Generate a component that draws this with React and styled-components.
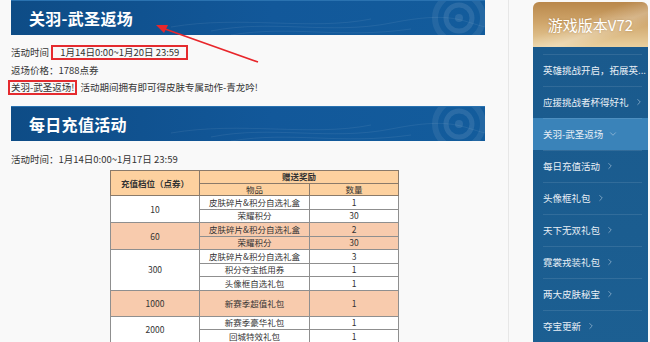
import styled, { createGlobalStyle } from 'styled-components'
import { ChevronRight, ChevronDown } from 'lucide-react'

const GlobalStyle = createGlobalStyle`
  html, body {
    margin: 0;
    padding: 0;
    background: #f9f9f9;
  }
  body {
    font-family: "Noto Sans CJK SC", "Noto Sans", sans-serif;
    color: #333;
  }
`

const Page = styled.div`
  display: flex;
  width: 650px;
  height: 342px;
  overflow: hidden;
  background: #f9f9f9;
`

const Main = styled.div`
  position: relative;
  width: 497px;
  padding-left: 11px;
  border-right: 1px solid #e7e7e7;
  flex-shrink: 0;
`

const Banner = styled.div`
  position: relative;
  width: 474px;
  height: 35px;
  margin-top: ${p => p.$top || 0}px;
  background: linear-gradient(90deg, #0e4c86 0%, #12589a 55%, #135c9c 100%);
  border-top: 1px solid #2a72b0;
  box-sizing: border-box;
  display: flex;
  align-items: center;
  padding-left: 18px;
  overflow: hidden;
`

const BannerTitle = styled.h2`
  margin: 0;
  font-size: 16px;
  font-weight: 700;
  color: #fff;
  letter-spacing: 0.3px;
  position: relative;
  z-index: 1;
`

const Deco = styled.svg`
  position: absolute;
  right: 0;
  top: 0;
  width: 474px;
  height: 35px;
`

const Info = styled.div`
  padding: 9px 0 9px;
  font-size: 9.5px;
  line-height: 17.5px;
`

const Line = styled.div`
  white-space: nowrap;
`

const RedBox = styled.span`
  display: inline-block;
  border: 2px solid #e52b2f;
  line-height: 11px;
  padding: 0 ${p => p.$pad || 2}px;
  margin-left: ${p => p.$ml || 0}px;
  margin-right: 3px;
`

const Arrow = styled.svg`
  position: absolute;
  left: 0;
  top: 0;
  width: 300px;
  height: 80px;
  pointer-events: none;
`

const TableWrap = styled.div`
  margin-left: 99px;
  margin-top: 2px;
`

const Table = styled.table`
  border-collapse: collapse;
  width: 288px;
  border: 1px solid #3a3a3a;
  font-size: 8.5px;
  color: #333;
  text-align: center;
  table-layout: fixed;
`

const Th = styled.th`
  background: #fdd19f;
  border: 1px solid #8a7a6a;
  font-weight: ${p => (p.$bold ? 700 : 400)};
  height: 11.5px;
  padding: 0;
  line-height: 11px;
`

const Td = styled.td`
  background: ${p => (p.$hl ? '#f8cbad' : '#fff')};
  border: 1px solid #8f8f8f;
  height: 12.5px;
  padding: 0;
  line-height: 11px;
`

const Aside = styled.div`
  margin-left: 24px;
  width: 115px;
  flex-shrink: 0;
  padding-top: 2px;
`

const AsideHead = styled.div`
  height: 45px;
  border-radius: 6px 6px 0 0;
  background:
    linear-gradient(160deg, rgba(255,255,255,0) 40%, rgba(255,255,255,0.25) 60%, rgba(255,255,255,0) 75%),
    linear-gradient(180deg, #b9884c 0%, #cfa56a 45%, #e9d09f 100%);
  color: #fff;
  font-size: 15px;
  display: flex;
  align-items: center;
  justify-content: center;
  text-shadow: 0 0 2px rgba(120, 80, 30, 0.4);
`

const Nav = styled.div`
  background: linear-gradient(180deg, #1a5a8d 0%, #1b5d90 60%, #1c5f92 100%);
  padding-top: 7px;
  height: 300px;
`

const NavItem = styled.div`
  height: 32px;
  display: flex;
  align-items: center;
  gap: 5px;
  padding-left: 10px;
  font-size: 9.5px;
  color: #e9eff6;
  background: ${p => (p.$active ? '#3a83b9' : 'transparent')};
  position: relative;
  white-space: nowrap;
  &::before {
    content: '';
    position: absolute;
    left: 10px;
    right: 6px;
    top: 0;
    border-top: 1px solid rgba(255, 255, 255, 0.1);
  }
`

const items = [
  { t: '英雄挑战开启，拓展英...', noArrow: true },
  { t: '应援挑战者杯得好礼' },
  { t: '关羽-武圣返场', active: true },
  { t: '每日充值活动' },
  { t: '头像框礼包' },
  { t: '天下无双礼包' },
  { t: '霓裳戎装礼包' },
  { t: '两大皮肤秘宝' },
  { t: '夺宝更新' },
]

const rows = [
  { tier: '10', span: 2, hl: false, items: [['皮肤碎片&积分自选礼盒', '1'], ['荣耀积分', '30']] },
  { tier: '60', span: 2, hl: true, items: [['皮肤碎片&积分自选礼盒', '2'], ['荣耀积分', '30']] },
  { tier: '300', span: 3, hl: false, items: [['皮肤碎片&积分自选礼盒', '3'], ['积分夺宝抵用券', '1'], ['头像框自选礼包', '1']] },
  { tier: '1000', span: 1, hl: true, tall: true, items: [['新赛季超值礼包', '1']] },
  { tier: '2000', span: 2, hl: false, items: [['新赛季豪华礼包', '1'], ['回城特效礼包', '1']] },
]

function BannerDeco() {
  return (
    <Deco viewBox="0 0 474 35">
      <g fill="none" stroke="#ffffff" strokeOpacity="0.07">
        <path d="M200 30 C 260 18, 320 34, 380 22 S 450 20, 474 26" />
        <path d="M220 34 C 280 24, 330 38, 400 28" />
        <path d="M160 26 C 230 14, 300 30, 360 18" />
      </g>
      <g fill="none" stroke="#ffffff">
        <circle cx="448" cy="17" r="24" strokeOpacity="0.08" strokeWidth="6" />
        <circle cx="448" cy="17" r="13" strokeOpacity="0.1" strokeWidth="5" />
      </g>
      <circle cx="448" cy="17" r="4" fill="#ffffff" fillOpacity="0.1" />
    </Deco>
  )
}

export default function App() {
  return (
    <>
      <GlobalStyle />
      <Page>
        <Main>
          <Banner>
            <BannerDeco />
            <BannerTitle>关羽-武圣返场</BannerTitle>
          </Banner>
          <Info>
            <Line>
              活动时间 <RedBox $pad={7}>1月14日0:00~1月20日 23:59</RedBox>
            </Line>
            <Line>返场价格：1788点券</Line>
            <Line>
              <RedBox $ml={-3} $pad={1}>关羽-武圣返场!</RedBox>活动期间拥有即可得皮肤专属动作-青龙吟!
            </Line>
          </Info>
          <Banner>
            <BannerDeco />
            <BannerTitle>每日充值活动</BannerTitle>
          </Banner>
          <Info style={{ paddingTop: 10, paddingBottom: 0 }}>
            <Line>活动时间：1月14日0:00~1月17日 23:59</Line>
          </Info>
          <TableWrap>
            <Table>
              <colgroup>
                <col style={{ width: 89 }} />
                <col style={{ width: 110 }} />
                <col style={{ width: 89 }} />
              </colgroup>
              <thead>
                <tr>
                  <Th $bold rowSpan={2}>充值档位（点券）</Th>
                  <Th $bold colSpan={2}>赠送奖励</Th>
                </tr>
                <tr>
                  <Th>物品</Th>
                  <Th>数量</Th>
                </tr>
              </thead>
              <tbody>
                {rows.map(r =>
                  r.items.map((it, i) => (
                    <tr key={r.tier + i}>
                      {i === 0 && (
                        <Td $hl={r.hl} rowSpan={r.span} style={r.tall ? { height: 25 } : undefined}>
                          {r.tier}
                        </Td>
                      )}
                      <Td $hl={r.hl}>{it[0]}</Td>
                      <Td $hl={r.hl}>{it[1]}</Td>
                    </tr>
                  ))
                )}
              </tbody>
            </Table>
          </TableWrap>
          <Arrow viewBox="0 0 300 80">
            <line x1="258" y1="62" x2="165" y2="29" stroke="#e8262b" strokeWidth="1.6" />
            <polygon points="156,25 168,25 164,33" fill="#e8262b" />
          </Arrow>
        </Main>
        <Aside>
          <AsideHead>游戏版本V72</AsideHead>
          <Nav>
            {items.map(it => (
              <NavItem key={it.t} $active={it.active}>
                {it.t}
                {!it.noArrow &&
                  (it.active ? (
                    <ChevronDown size={10} strokeWidth={1.4} color="#b9cfe3" />
                  ) : (
                    <ChevronRight size={10} strokeWidth={1.4} color="#b9cfe3" />
                  ))}
              </NavItem>
            ))}
          </Nav>
        </Aside>
      </Page>
    </>
  )
}
